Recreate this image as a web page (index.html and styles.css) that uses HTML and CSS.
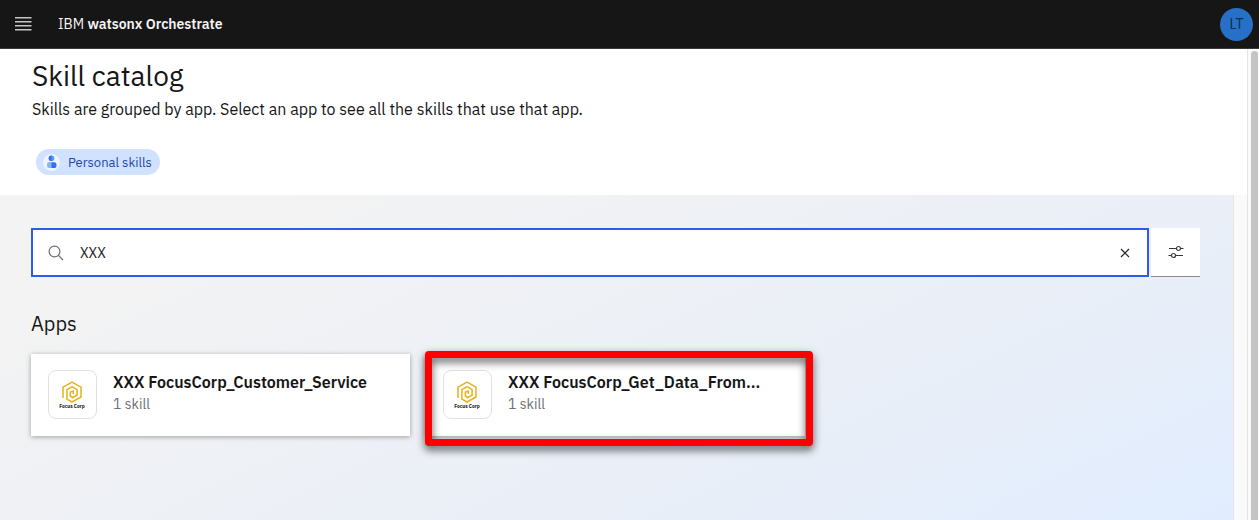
FILE: index.html
```html
<!DOCTYPE html>
<html lang="en">
<head>
<meta charset="utf-8">
<meta name="viewport" content="width=device-width, initial-scale=1">
<title>Skill catalog</title>
<link rel="stylesheet" href="styles.css">
</head>
<body>
<svg class="defs" aria-hidden="true">
  <symbol id="focus-logo" viewBox="0 0 48 48">
    <path fill="none" stroke="#e6b422" stroke-width="1.600" d="M14.300 27.500V16.500L23.500 11.300L32.700 16.500V26.500L23.500 31.700L18.300 28.700V19L23.500 16L28.700 19V24.500L24 27.300L21.800 25.500V21.500L24.800 20.500V23.500"/>
  </symbol>
</svg>
<header class="header">
  <button class="menu" aria-label="Menu">
    <svg width="18" height="14" viewBox="0 0 18 14" fill="#c6c6c6"><path d="M1 0H17.500V1.500H1ZM1 4H17.500V5.500H1ZM1 8H17.500V9.500H1ZM1 12H17.500V13.500H1Z"/></svg>
  </button>
  <a class="brand" href="#">IBM <b>watsonx Orchestrate</b></a>
  <button class="avatar" aria-label="Account LT">LT</button>
</header>
<div class="shell">
  <main class="page">
    <section class="intro">
      <h1>Skill catalog</h1>
      <p>Skills are grouped by app. Select an app to see all the skills that use that app.</p>
      <button class="tag">
        <svg width="17" height="17" viewBox="0 0 17 17"><circle cx="8.500" cy="8.500" r="8.500" fill="#edf5ff"/><circle cx="8.500" cy="4.200" r="2.800" fill="#5b93fa"/><path d="M8.500 1.400A2.800 2.800 0 0 0 8.500 7Z" fill="#2f72f5"/><rect x="4" y="8" width="9.400" height="6" rx="2.300" fill="#8bb5ff"/><path d="M8.500 8.500H11A2.400 2.400 0 0 1 13.400 10.900V12A2 2 0 0 1 11.400 14H8.500Z" fill="#2f72f5"/></svg>
        Personal skills
      </button>
    </section>
    <div class="body">
      <section class="catalog">
        <div class="toolbar">
          <div class="search">
            <svg width="16" height="16" viewBox="0 0 16 16" fill="none" stroke="#6f6f6f" stroke-width="1.200"><circle cx="6.500" cy="6.500" r="5.400"/><path d="M10.400 10.400L15 15"/></svg>
            <input type="text" aria-label="Search apps" value="XXX">
            <button class="clear" aria-label="Clear search"><svg width="16" height="16" viewBox="0 0 16 16" fill="none" stroke="#262626" stroke-width="1.200"><path d="M4 4L12 12M12 4L4 12"/></svg></button>
          </div>
          <button class="filter" aria-label="Filter"><svg width="16" height="16" viewBox="0 0 16 16" fill="none" stroke="#393939" stroke-width="1.200"><path d="M1 4.500H8.500M12.500 4.500H15.500M.5 11.500H3.500M7.500 11.500H15"/><circle cx="10.500" cy="4.500" r="2"/><circle cx="5.500" cy="11.500" r="2"/></svg></button>
        </div>
        <h2>Apps</h2>
        <div class="cards">
          <a class="card" href="#">
            <svg class="logo" viewBox="0 0 48 48"><use href="#focus-logo"/><text x="23.500" y="38" text-anchor="middle">Focus Corp</text></svg>
            <div class="info"><h3>XXX FocusCorp_Customer_Service</h3><p>1 skill</p></div>
          </a>
          <a class="card marked" href="#">
            <svg class="logo" viewBox="0 0 48 48"><use href="#focus-logo"/><text x="23.500" y="38" text-anchor="middle">Focus Corp</text></svg>
            <div class="info"><h3>XXX FocusCorp_Get_Data_From...</h3><p>1 skill</p></div>
          </a>
        </div>
      </section>
      <div class="gutter"></div>
    </div>
  </main>
  <div class="track"><div class="thumb"></div></div>
</div>
</body>
</html>
```
FILE: styles.css
```css
* { box-sizing: border-box; }
body {
  margin: 0;
  height: 100vh;
  display: flex;
  flex-direction: column;
  overflow: hidden;
  font-family: "IBM Plex Sans", "Noto Sans", sans-serif;
  color: #161616;
  background: #fff;
}
h1, h2, h3, p { margin: 0; font-weight: 400; }
button { border: 0; padding: 0; background: none; font: inherit; color: inherit; }
a { color: inherit; text-decoration: none; }
svg { display: block; flex: none; }
.defs { position: absolute; width: 0; height: 0; }

.header {
  flex: none;
  height: 49px;
  display: flex;
  align-items: center;
  padding: 0 6px 0 14px;
  background: #161616;
  border-bottom: 1px solid #393939;
  color: #f4f4f4;
}
.brand { margin-left: 26px; font-size: 14px; line-height: 20px; }
.brand b { font-weight: 600; }
.avatar {
  margin-left: auto;
  width: 33px;
  height: 33px;
  border-radius: 50%;
  background: #2671c7;
  color: #122b46;
  font-size: 14px;
}

.shell { flex: 1; min-height: 0; display: flex; }
.page { flex: 1; min-width: 0; display: flex; flex-direction: column; }
.intro { height: 146px; padding: 7px 32px 0; }
.intro h1 { font-size: 28px; line-height: 40px; }
.intro p { font-size: 16px; line-height: 26px; }
.tag {
  display: flex;
  align-items: center;
  gap: 8px;
  height: 26px;
  margin: 27px 0 0 4px;
  padding: 0 8px 0 7px;
  border-radius: 13px;
  background: #d0e2ff;
  color: #2346a8;
  font-size: 13px;
}

.body { flex: 1; display: flex; }
.catalog {
  flex: 1;
  min-width: 0;
  padding: 33px 33px 32px 31px;
  background: linear-gradient(155deg, #f3f3f3 15%, #e8eef8 72%, #e1edff);
}
.gutter { width: 14px; background: #fafafa; border-left: 1px solid #e5e5e5; }
.track {
  width: 12px;
  padding: 2px 1px 0 3px;
  background: #fafafa;
  border-left: 1px solid #e5e5e5;
}
.thumb { height: 100%; border-radius: 4px 4px 0 0; background: #c4c4c4; }

.toolbar { display: flex; gap: 2px; }
.search {
  flex: 1;
  height: 49px;
  display: flex;
  align-items: center;
  padding: 0 14px 0 15px;
  border: 2px solid #2b5bf0;
  background: #fff;
}
.search input {
  flex: 1;
  min-width: 0;
  height: 40px;
  margin-left: 16px;
  padding: 0;
  border: 0;
  outline: 0;
  font: inherit;
  font-size: 14px;
  color: #262626;
}
.filter {
  width: 49px;
  height: 49px;
  display: grid;
  place-items: center;
  background: #fff;
  border-bottom: 1px solid #8d8d8d;
}

.catalog h2 { margin: 32px 0 16px; font-size: 20px; line-height: 29px; }
.cards { display: grid; grid-template-columns: repeat(3, 1fr); gap: 16px; }
.card {
  position: relative;
  display: flex;
  gap: 16px;
  height: 82px;
  padding: 16px 17px;
  background: #fff;
  box-shadow: 0 1px 5px rgba(0, 0, 0, .35);
}
.marked::after {
  content: "";
  position: absolute;
  inset: -3px -8px -10px -1px;
  border: 7px solid #f00;
  border-radius: 4px;
  filter: drop-shadow(0 4px 4px rgba(0, 0, 0, .65));
}
.logo {
  width: 49px;
  height: 49px;
  border: 1px solid #e0e0e0;
  border-radius: 8px;
}
.logo text { font: 700 5px "IBM Plex Sans", "Noto Sans", sans-serif; fill: #161616; }
.info { min-width: 0; }
.info h3 { font-size: 16px; line-height: 24px; font-weight: 600; white-space: nowrap; }
.info p { font-size: 14px; line-height: 20px; color: #6f6f6f; }
```
